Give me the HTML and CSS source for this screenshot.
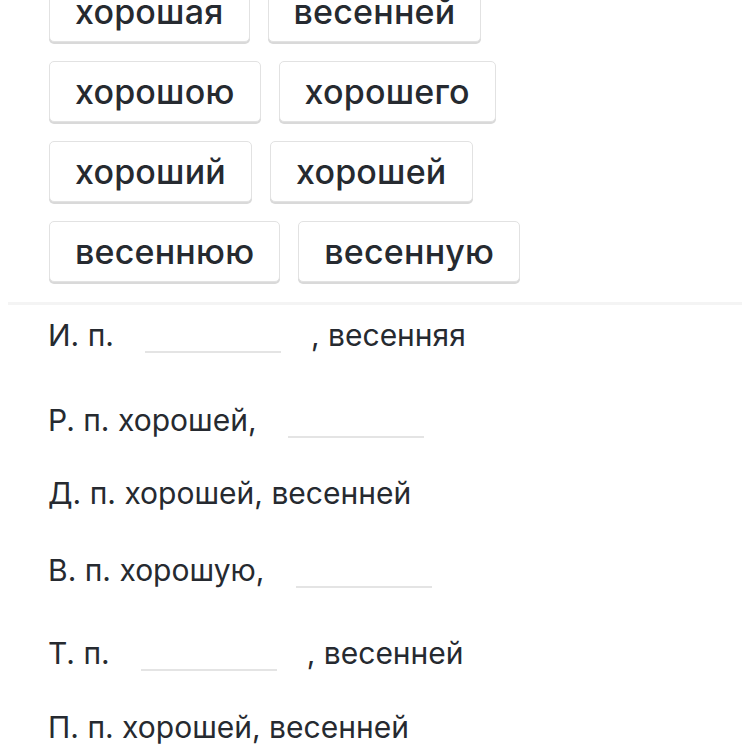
FILE: index.html
```html
<!DOCTYPE html>
<html>
<head>
    <title>Склонение</title>
    <link rel="stylesheet" href="styles.css">
</head>
<body>
    <div class="choices">
        <div class="choice-row">
            <span class="chip">хорошая</span>
            <span class="chip">весенней</span>
        </div>
        <div class="choice-row">
            <span class="chip">хорошою</span>
            <span class="chip">хорошего</span>
        </div>
        <div class="choice-row">
            <span class="chip">хороший</span>
            <span class="chip">хорошей</span>
        </div>
        <div class="choice-row">
            <span class="chip">весеннюю</span>
            <span class="chip">весенную</span>
        </div>
    </div>

    <div class="divider"></div>

    <div class="cases">
        <div class="case">
            <span>И. п.</span>
            <span class="blank"></span>
            <span>, весенняя</span>
        </div>
        <div class="case">
            <span>Р. п. хорошей,</span>
            <span class="blank"></span>
        </div>
        <div class="case">
            <span>Д. п. хорошей, весенней</span>
        </div>
        <div class="case">
            <span>В. п. хорошую,</span>
            <span class="blank"></span>
        </div>
        <div class="case">
            <span>Т. п.</span>
            <span class="blank"></span>
            <span>, весенней</span>
        </div>
        <div class="case">
            <span>П. п. хорошей, весенней</span>
        </div>
    </div>
</body>
</html>
```

FILE: styles.css
```css
body {
    margin: 0;
    background: #fff;
    color: #262a30;
    font-family: Inter, "Noto Sans", sans-serif;
    overflow: hidden;
}

.choices {
    margin-top: -19px;
    padding-left: 49px;
    display: flex;
    flex-direction: column;
    gap: 19px;
}

.choice-row {
    display: flex;
    gap: 18px;
}

.chip {
    box-sizing: border-box;
    height: 61px;
    padding: 0 25px;
    display: flex;
    align-items: center;
    font-size: 34px;
    font-weight: 500;
    letter-spacing: 0.2px;
    border: 1px solid #e2e2e2;
    border-radius: 5px;
    box-shadow: 0 2px 0 #d9d9d9;
    background: #fff;
}

.divider {
    margin: 20px 8px 0;
    height: 3px;
    background: #f4f4f4;
}

.cases {
    padding-left: 48px;
}

.case {
    display: flex;
    align-items: baseline;
    font-size: 30px;
    font-weight: 400;
    height: 77px;
    line-height: 60px;
}

.case:nth-child(1) { height: 85px; }
.case:nth-child(2) { height: 73px; }
.case:nth-child(4) { height: 83px; }
.case:nth-child(5) { height: 74px; }

.blank {
    display: inline-block;
    width: 136px;
    height: 2px;
    background: #e4e4e4;
    margin-left: 31px;
    margin-right: 30px;
    position: relative;
    top: 7px;
}
```
